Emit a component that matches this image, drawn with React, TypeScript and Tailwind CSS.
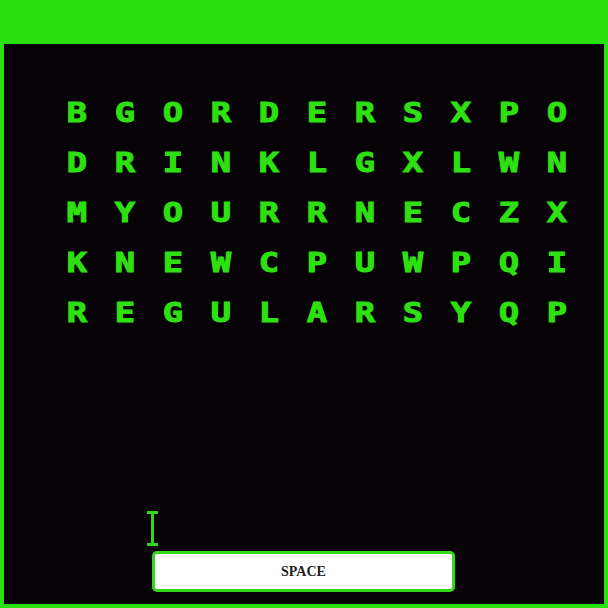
const ROWS = ["BGORDERSXPO", "DRINKLGXLWN", "MYOURRNECZX", "KNEWCPUWPQI", "REGULARSYQP"];

function Caret() {
  return (
    <svg width="11" height="35" viewBox="0 0 11 35" className="block">
      <rect x="0" y="0" width="11" height="3" fill="#2fd81c" />
      <rect x="4" y="0" width="3" height="35" fill="#2fd81c" />
      <rect x="0" y="32" width="11" height="3" fill="#2fd81c" />
    </svg>
  );
}

export default function App() {
  return (
    <div className="w-[608px] h-[608px] bg-[#2ce00f] pt-[44px] px-[4px] pb-[4px]">
      <div className="h-full bg-[#060206] flex flex-col">
        {/* Letter grid */}
        <div className="pt-[43px] pl-[49px] grid grid-cols-[repeat(11,48px)] auto-rows-[50px]">
          {ROWS.flatMap((row, r) =>
            row.split("").map((ch, c) => (
              <div
                key={`${r}-${c}`}
                className="flex items-center justify-center text-[#2ee012] text-[27px] font-bold leading-none font-['DejaVu_Sans_Mono',monospace] scale-x-125 [-webkit-text-stroke:1px_#2ee012]"
              >
                {ch}
              </div>
            ))
          )}
        </div>

        {/* Input area */}
        <div className="mt-auto pb-[12px] flex flex-col">
          <div className="ml-[143px] mb-[5px]">
            <Caret />
          </div>
          <button className="ml-[148px] w-[303px] h-[41px] bg-white border-[3px] border-[#35d81a] rounded-[5px] flex items-center justify-center text-[14px] font-bold text-[#222] font-['Liberation_Serif',serif]">
            SPACE
          </button>
        </div>
      </div>
    </div>
  );
}
